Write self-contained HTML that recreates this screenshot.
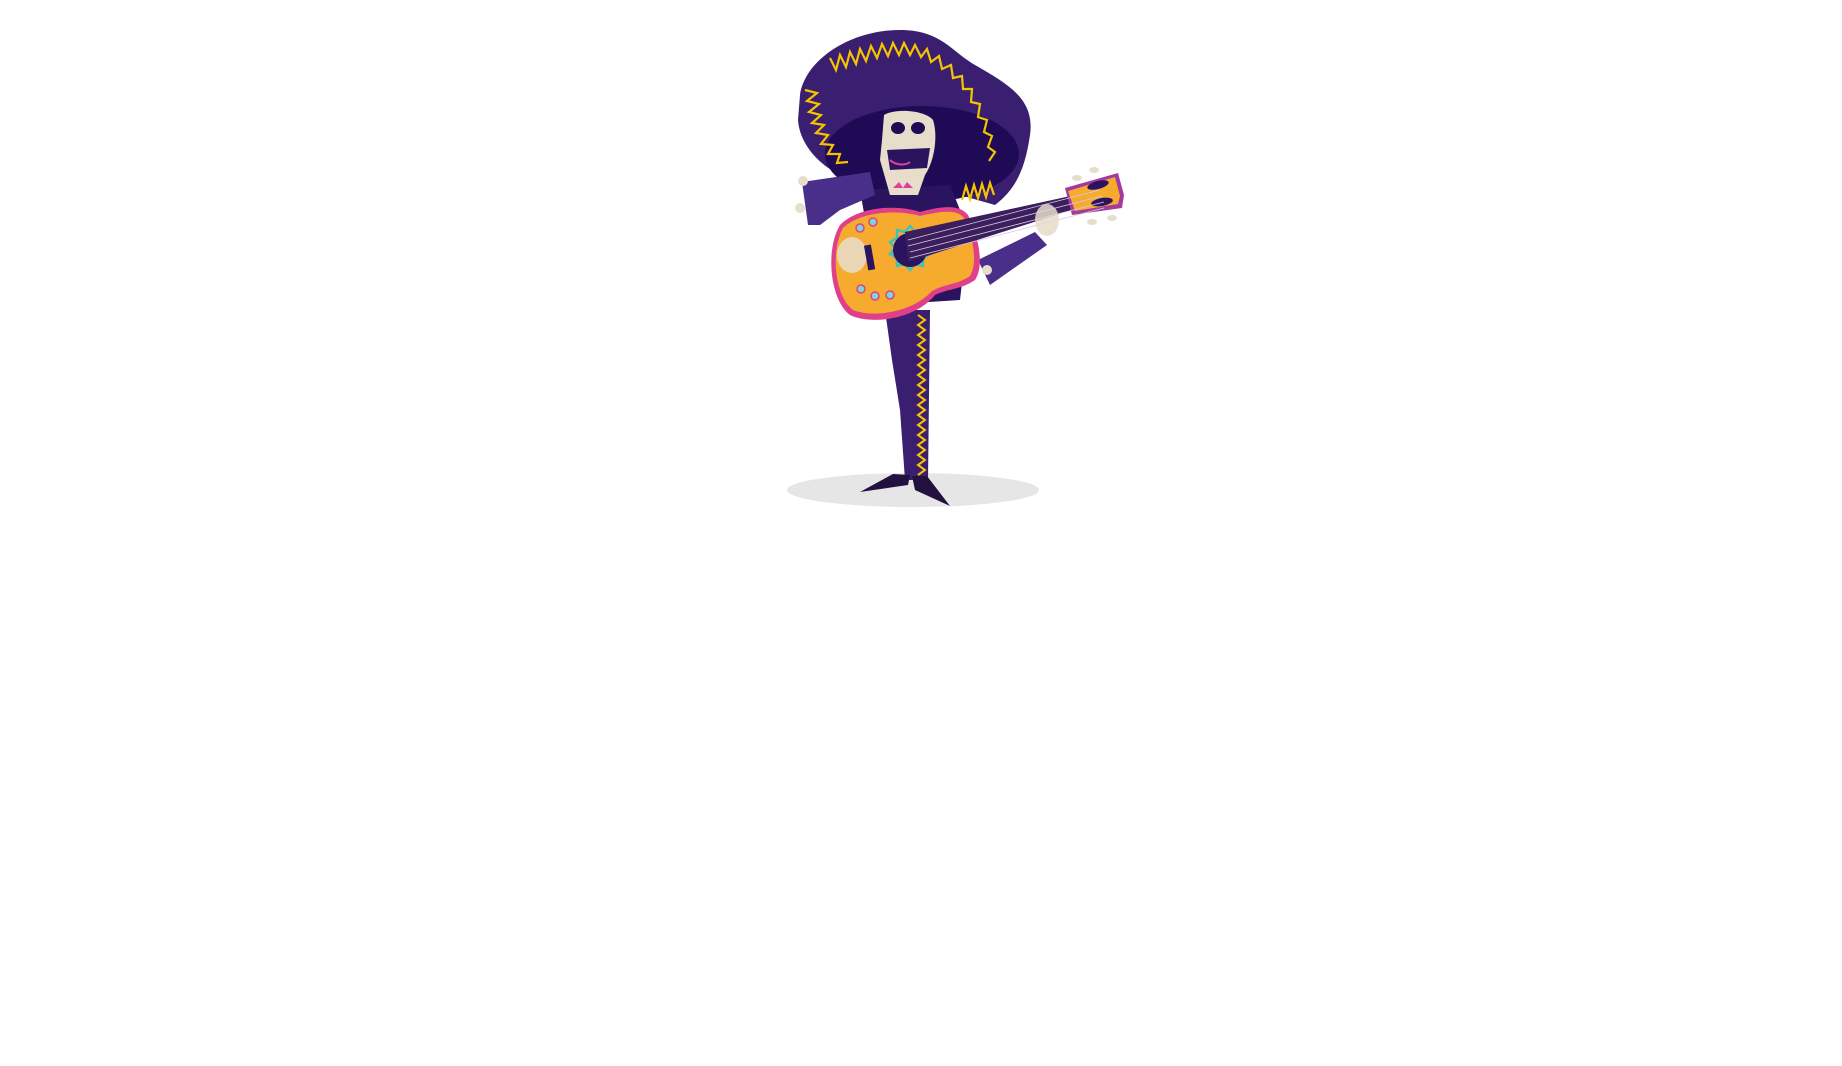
<!DOCTYPE html>
<html><head><meta charset="utf-8"><style>html,body{margin:0;padding:0;background:#fff;width:1842px;height:1066px;overflow:hidden}svg{display:block}</style></head>
<body>
<svg width="1842" height="1066" viewBox="0 0 1842 1066" xmlns="http://www.w3.org/2000/svg">
<ellipse cx="913" cy="490" rx="126" ry="17" fill="#e6e6e6"/>
<!-- hat -->
<path d="M800 95 C 805 60 850 30 900 30 C 940 30 950 50 975 65 C 1010 85 1035 100 1030 135 C 1025 170 1015 190 995 205 L 960 195 C 930 200 900 190 870 185 C 830 178 800 150 798 120 Z" fill="#3a1f70"/>
<ellipse cx="922" cy="154" rx="97" ry="48" fill="#1f0a55"/>
<path d="M830 58 l6 12 l4-15 l6 12 l4-15 l6 12 l4-15 l6 12 l5-15 l6 12 l5-14 l6 12 l5-13 l6 12 l5-12 l6 12 l5-10 l6 12 l6-8 l4 13 l8-6 l3 13 l9-4 l2 13 l9-2 l1 13 l9 0 l-1 13 l9 2 l-2 13 l9 3 l-3 12 l8 4 l-4 11 l7 5 l-6 9" fill="none" stroke="#f5c400" stroke-width="2.2"/>
<path d="M805 90 l12 3 l-10 8 l12 3 l-10 8 l12 3 l-9 8 l12 2 l-8 8 l12 2 l-7 9 l12 1 l-5 9 l12 0 l-3 9 l11 -1" fill="none" stroke="#f5c400" stroke-width="2.2"/>
<path d="M962 200 l4-14 l4 13 l4-14 l4 13 l4-14 l4 13 l4-14 l4 12" fill="none" stroke="#f5c400" stroke-width="2.2"/>
<!-- legs -->
<path d="M885 310 L930 310 L928 480 L905 480 L900 410 L892 360 Z" fill="#3a1f70"/>
<path d="M918 315 l7 5 l-7 5 l7 5 l-7 5 l7 5 l-7 5 l7 5 l-7 5 l7 5 l-7 5 l7 5 l-7 5 l7 5 l-7 5 l7 5 l-7 5 l7 5 l-7 5 l7 5 l-7 5 l7 5 l-7 5 l7 5 l-7 5 l7 5 l-7 5 l7 5 l-7 5 l7 5 l-7 5 l7 5 l-7 5" fill="none" stroke="#f5c400" stroke-width="2"/>
<path d="M893 474 L910 475 L908 485 L860 492 Z" fill="#22103f"/>
<path d="M912 476 L927 476 L950 506 L915 490 Z" fill="#22103f"/>
<!-- torso/arms -->
<path d="M860 190 L950 185 L968 230 L960 300 L880 305 Z" fill="#2a1460"/>
<path d="M802 182 L870 172 L875 195 L840 210 L820 225 L808 225 Z" fill="#4a2f8a"/>
<circle cx="803" cy="181" r="5" fill="#e8dccb"/><circle cx="800" cy="208" r="5" fill="#e8dccb"/>
<path d="M978 260 L1035 232 L1047 245 L990 285 Z" fill="#4a2f8a"/>
<circle cx="987" cy="270" r="5" fill="#e8dccb"/>
<!-- skull -->
<path d="M884 115 C 895 108 925 110 933 120 C 938 135 935 160 925 175 L918 195 L890 195 L880 160 L882 140 Z" fill="#e8dccb"/>
<ellipse cx="898" cy="128" rx="7" ry="6" fill="#1f0a55"/><ellipse cx="918" cy="128" rx="7" ry="6" fill="#1f0a55"/>
<path d="M887 150 L930 148 L927 168 L890 170 Z" fill="#2a1460"/>
<path d="M890 160 C 895 165 905 166 910 162" stroke="#e0409a" stroke-width="2" fill="none"/>
<path d="M893 188 l6-6 l4 6 l4-6 l6 6" fill="#e0409a"/>
<!-- guitar -->
<path d="M840 225 C 860 205 900 205 920 212 C 945 205 960 205 968 215 C 978 235 985 265 975 280 C 960 290 950 288 935 295 C 915 320 870 325 850 315 C 830 300 825 250 840 225 Z" fill="#e0408a"/>
<path d="M843 228 C 862 210 900 210 920 216 C 945 210 958 210 964 218 C 973 237 978 262 970 276 C 957 285 947 283 932 291 C 912 313 872 318 853 310 C 835 297 830 252 843 228 Z" fill="#f6ab2f"/>
<path d="M910 226 l5 6 l8-2 l0 8 l7 4 l-5 6 l5 6 l-7 4 l0 8 l-8-2 l-5 6 l-5-6 l-8 2 l0-8 l-7-4 l5-6 l-5-6 l7-4 l0-8 l8 2 Z" fill="none" stroke="#3fc3b8" stroke-width="2.5"/>
<circle cx="910" cy="250" r="17" fill="#2a1460"/>
<circle cx="860" cy="228" r="4" fill="#7ad6d8" stroke="#e0408a" stroke-width="1.5"/><circle cx="873" cy="222" r="4" fill="#7ad6d8" stroke="#e0408a" stroke-width="1.5"/>
<circle cx="861" cy="289" r="4" fill="#7ad6d8" stroke="#e0408a" stroke-width="1.5"/><circle cx="875" cy="296" r="4" fill="#7ad6d8" stroke="#e0408a" stroke-width="1.5"/><circle cx="890" cy="295" r="4" fill="#7ad6d8" stroke="#e0408a" stroke-width="1.5"/>
<path d="M905 232 L1075 195 L1078 208 L908 262 Z" fill="#3a1f5c"/>
<path d="M1065 188 L1118 173 L1124 195 L1122 208 L1072 215 Z" fill="#a33a9e"/>
<path d="M1068 191 L1115 177 L1120 196 L1118 204 L1075 211 Z" fill="#f6ab2f"/>
<ellipse cx="1098" cy="185" rx="11" ry="4" transform="rotate(-15 1098 185)" fill="#2a1460"/>
<ellipse cx="1102" cy="202" rx="11" ry="4" transform="rotate(-10 1102 202)" fill="#2a1460"/>
<g fill="#e8dccb"><ellipse cx="1077" cy="178" rx="5" ry="3"/><ellipse cx="1094" cy="170" rx="5" ry="3"/><ellipse cx="1092" cy="222" rx="5" ry="3"/><ellipse cx="1112" cy="218" rx="5" ry="3"/></g>
<path d="M908 240 L1100 190 M908 246 L1102 196 M910 252 L1104 202 M910 258 L1104 208" stroke="#d8c8e8" stroke-width="0.8"/>
<ellipse cx="1047" cy="220" rx="12" ry="16" fill="#e8dccb" opacity=".85"/>
<ellipse cx="852" cy="255" rx="15" ry="18" fill="#e8dccb" opacity=".85"/>
<rect x="866" y="245" width="7" height="25" transform="rotate(-10 869 257)" fill="#2a1460"/>
</svg>
</body></html>
